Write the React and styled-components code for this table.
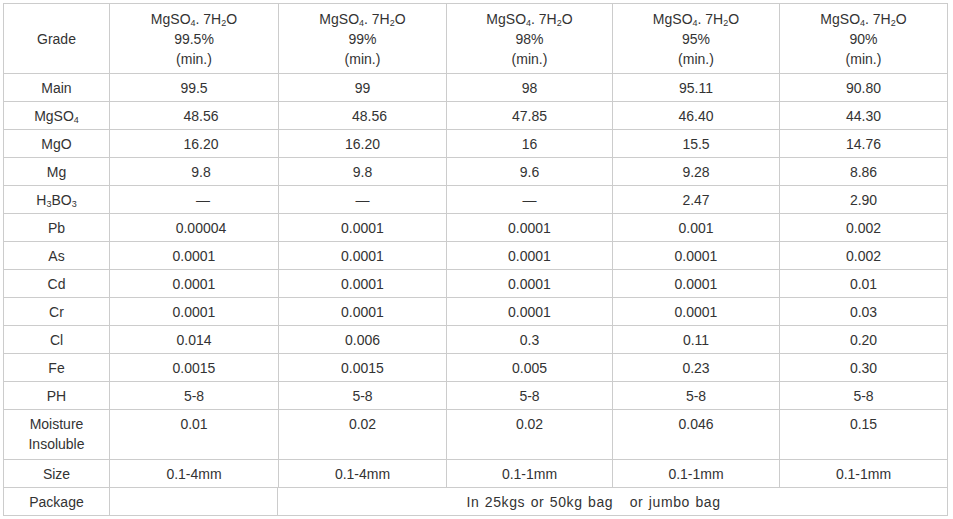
import React from 'react';
import styled, { createGlobalStyle } from 'styled-components';

const GlobalStyle = createGlobalStyle`
    body {
        margin: 0;
        background: #fff;
        font-family: "Liberation Sans", Arial, sans-serif;
        color: #333;
    }
`;

const COLS = '106px 169px 168px 166px 167px 168px';

const grades = ['99.5%', '99%', '98%', '95%', '90%'];

function Sub({ children }) {
    return <SubText>{children}</SubText>;
}

// [label, values, nudges]
const rows = [
    ['Main', ['99.5', '99', '98', '95.11', '90.80']],
    [<>MgSO<Sub>4</Sub></>, ['48.56', '48.56', '47.85', '46.40', '44.30'], [7, 7, 0, 0, 0]],
    ['MgO', ['16.20', '16.20', '16', '15.5', '14.76'], [7, 0, 0, 0, 0]],
    ['Mg', ['9.8', '9.8', '9.6', '9.28', '8.86'], [7, 0, 0, 0, 0]],
    [<>H<Sub>3</Sub>BO<Sub>3</Sub></>, ['—', '—', '—', '2.47', '2.90'], [9, 0, 0, 0, 0]],
    ['Pb', ['0.00004', '0.0001', '0.0001', '0.001', '0.002'], [7, 0, 0, 0, 0]],
    ['As', ['0.0001', '0.0001', '0.0001', '0.0001', '0.002']],
    ['Cd', ['0.0001', '0.0001', '0.0001', '0.0001', '0.01']],
    ['Cr', ['0.0001', '0.0001', '0.0001', '0.0001', '0.03']],
    ['Cl', ['0.014', '0.006', '0.3', '0.11', '0.20']],
    ['Fe', ['0.0015', '0.0015', '0.005', '0.23', '0.30']],
    ['PH', ['5-8', '5-8', '5-8', '5-8', '5-8']],
];

const Formula = () => (
    <>
        MgSO<Sub>4</Sub>. 7H<Sub>2</Sub>O
    </>
);

const App = () => {
    return (
        <Page>
            <GlobalStyle />
            <Table>
                <Row $h={70}>
                    <Cell $middle>
                        <Text>Grade</Text>
                    </Cell>
                    {grades.map((g) => (
                        <Cell key={g} $middle>
                            <Text>
                                <Formula />
                                <br />
                                {g}
                                <br />
                                (min.)
                            </Text>
                        </Cell>
                    ))}
                </Row>
                {rows.map(([label, values, nudges], i) => (
                    <Row key={i} $h={28}>
                        <Cell>
                            <Text>{label}</Text>
                        </Cell>
                        {values.map((v, j) => (
                            <Cell key={j} $nudge={nudges ? nudges[j] : 0}>
                                <Text>{v}</Text>
                            </Cell>
                        ))}
                    </Row>
                ))}
                <Row $h={50}>
                    <Cell>
                        <Text>
                            Moisture
                            <br />
                            Insoluble
                        </Text>
                    </Cell>
                    {['0.01', '0.02', '0.02', '0.046', '0.15'].map((v, j) => (
                        <Cell key={j}>
                            <Text>{v}</Text>
                        </Cell>
                    ))}
                </Row>
                <Row $h={28}>
                    <Cell>
                        <Text>Size</Text>
                    </Cell>
                    {['0.1-4mm', '0.1-4mm', '0.1-1mm', '0.1-1mm', '0.1-1mm'].map((v, j) => (
                        <Cell key={j}>
                            <Text>{v}</Text>
                        </Cell>
                    ))}
                </Row>
                <Row $h={28} $cols="106px 168px 670px">
                    <Cell>
                        <Text>Package</Text>
                    </Cell>
                    <Cell />
                    <Cell $nudge={-19}>
                        <Text $spread>In 25kgs or 50kg bag&nbsp;&nbsp; or jumbo bag</Text>
                    </Cell>
                </Row>
            </Table>
        </Page>
    );
};

export default App;

const Page = styled.div`
    padding: 3px;
`;

const Table = styled.div`
    width: 945px;
    border-top: 1px solid #cccccc;
    border-left: 1px solid #cccccc;
    box-sizing: border-box;
    font-size: 14px;
    line-height: 20px;
`;

const Row = styled.div`
    display: grid;
    grid-template-columns: ${(p) => p.$cols || COLS};
    height: ${(p) => p.$h}px;
`;

const Cell = styled.div`
    box-sizing: border-box;
    border-right: 1px solid #cccccc;
    border-bottom: 1px solid #cccccc;
    display: flex;
    align-items: ${(p) => (p.$middle ? 'center' : 'flex-start')};
    justify-content: center;
    padding-top: ${(p) => (p.$middle ? 0 : 4)}px;
    padding-left: ${(p) => Math.max(p.$nudge || 0, 0) * 2}px;
    padding-right: ${(p) => Math.max(-(p.$nudge || 0), 0) * 2}px;
`;

const Text = styled.div`
    text-align: center;
    white-space: nowrap;
    letter-spacing: ${(p) => (p.$spread ? '0.6px' : 'normal')};
    word-spacing: ${(p) => (p.$spread ? '1px' : 'normal')};
`;

const SubText = styled.span`
    font-size: 9px;
    vertical-align: -2px;
    line-height: 0;
    letter-spacing: normal;
`;
